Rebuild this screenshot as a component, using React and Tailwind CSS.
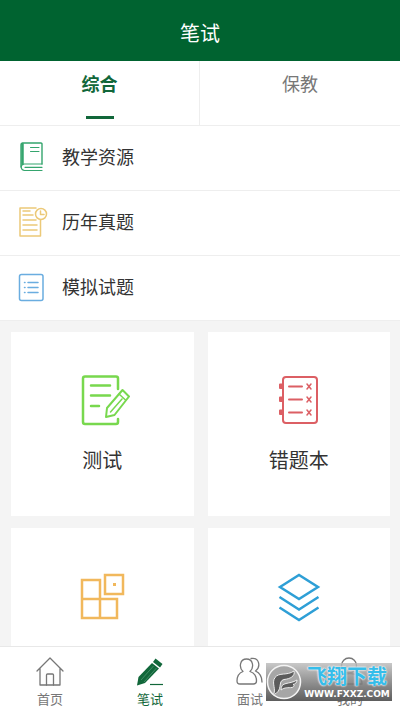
const iconProps = { fill: "none", strokeLinecap: "round", strokeLinejoin: "round" };

function BookIcon() {
  return (
    <svg className="w-8 h-8" viewBox="0 0 32 32" {...iconProps} stroke="#35a56e" strokeWidth="1.4">
      <path d="M26 24H8.500a3.200 3.200 0 0 0 0 6.500H26M9 27.300H26" strokeWidth="1.2" />
      <path d="M26 24V4a1 1 0 0 0-1-1H7a2 2 0 0 0-2 2V27" />
      <path d="M6.500 4V24" strokeWidth="2.500" />
      <path d="M14.500 7.500H23M14.500 11.500H23" strokeWidth="1" />
    </svg>
  );
}

function PaperIcon() {
  return (
    <svg className="w-8 h-8" viewBox="0 0 32 32" {...iconProps} stroke="#ecc978" strokeWidth="1.5">
      <path d="M20 3H4V31H24.500V15" />
      <circle cx="25" cy="9" r="5.500" />
      <path d="M24.500 6V9.500H28" />
      <path d="M7 6H14M7 10H17M7 15H20M7 20H21M7 25H21" />
    </svg>
  );
}

function ListIcon() {
  return (
    <svg className="w-8 h-8" viewBox="0 0 32 32" {...iconProps} stroke="#6aade0" strokeWidth="1.5">
      <rect x="3.500" y="4.500" width="23.500" height="26" rx="2" />
      <path d="M12 12.500H22M12 17.500H22M12 22.500H22" />
      <path d="M8.500 12.500H9M8.500 17.500H9M8.500 22.500H9" />
    </svg>
  );
}

function TestIcon() {
  return (
    <svg className="w-14 h-14" viewBox="-6 0 56 56" {...iconProps} stroke="#78d84e" strokeWidth="2.500">
      <path d="M38 17V6.500a2 2 0 0 0-2-2H5a2 2 0 0 0-2 2V50a2 2 0 0 0 2 2H36a2 2 0 0 0 2-2V47" />
      <path d="M11 13.500H30M11 23.500H30M11 34H19" />
      <path d="M26 45L27 36L42.500 18L49 24.500L34.500 43Z" strokeWidth="2" />
      <path d="M39 22L45.500 28M30.500 40L42 27" strokeWidth="1.500" />
    </svg>
  );
}

function WrongIcon() {
  return (
    <svg className="w-14 h-14" viewBox="0 0 56 56" {...iconProps} stroke="#dc5f64" strokeWidth="2">
      <rect x="12" y="5" width="34" height="46" rx="3" />
      <path d="M9 12.500H11V16H9ZM9 25.500H11V29H9ZM9 38.500H11V42H9Z" />
      <path d="M18 14.500H31M18 27.500H31M18 40.500H31" />
      <path d="M36 12L40 17M40 12L36 17M36 25L40 30M40 25L36 30M36 38L40 43M40 38L36 43" strokeWidth="1.500" />
    </svg>
  );
}

function BlocksIcon() {
  return (
    <svg className="w-14 h-14" viewBox="-5 0 56 56" fill="none" stroke="#f1b85c" strokeWidth="2.500">
      <path d="M3 12H21V50H3ZM3 31H38V50H21" />
      <rect x="26" y="7" width="18" height="19" />
      <rect x="34" y="15" width="3" height="3" fill="#f1b85c" stroke="none" />
    </svg>
  );
}

function LayersIcon() {
  return (
    <svg className="w-14 h-14" viewBox="0 0 56 56" fill="none" stroke="#2e9fd6" strokeWidth="2.500">
      <path d="M9 19L28 7L47 19L28 31Z" />
      <path d="M8.500 29L28 41.500L47.500 29M8.500 39.500L28 52L47.500 39.500" />
    </svg>
  );
}

function HomeIcon() {
  return (
    <svg className="w-8 h-8" viewBox="0 0 32 32" {...iconProps} stroke="#777" strokeWidth="1.300">
      <path d="M3 16L16 3L29 16M6 13.500V30H26V13.500" />
      <path d="M12.500 30V20a1 1 0 0 1 1-1H18.500a1 1 0 0 1 1 1V30" />
    </svg>
  );
}

function PencilIcon() {
  return (
    <svg className="w-8 h-8" viewBox="0 0 32 32" fill="#11673a">
      <path d="M21.500 3.500L28.500 9L26 12.500L19 7Z" />
      <path d="M18 8L25 13.500L11 28L3 30.500L4.500 22Z" />
      <path d="M19.500 11L7 25M22.500 13L10 27" stroke="#4d9470" strokeWidth="0.800" />
      <path d="M16 29.500H29" stroke="#11673a" strokeWidth="1.200" />
    </svg>
  );
}

function PeopleIcon() {
  return (
    <svg className="w-8 h-8" viewBox="0 0 32 32" {...iconProps} stroke="#777" strokeWidth="1.300">
      <path d="M9 16.500C4.500 12 6 4 12.500 4S20.500 12 16 16.500C20.500 18 22.500 21.500 22.500 26C22.500 28 21.500 29 19.500 29H6C4 29 3 28 3 26C3 21.500 5 18 9 16.500Z" />
      <path d="M17 3.500C25.500 2 27 12 21.500 16C26 18 28 22 28 27" />
    </svg>
  );
}

function UserIcon() {
  return (
    <svg className="w-8 h-8" viewBox="0 0 32 32" {...iconProps} stroke="#777" strokeWidth="1.300">
      <circle cx="15" cy="10.500" r="7.500" />
      <path d="M4 29C4 15 28 15 28 29Z" />
    </svg>
  );
}

function SiteLogo() {
  return (
    <svg className="w-9 h-9 shrink-0" viewBox="0 0 36 36" fill="none">
      <circle cx="18" cy="18" r="16.500" fill="#a6a6a6" stroke="#f4f4f4" strokeWidth="1.500" />
      <g fill="#5c5c5c" stroke="#eee" strokeWidth="1" strokeLinejoin="round">
        <path d="M7 31C11 26 5 19 9 13.500C13 8 21 12 28 7C29.500 12 24 15 18 15.500C11 17 18 27 7 31Z" />
        <path d="M15 26C15 17 23 21 31 16C31 19 29 20 27 20.500C29 21 28 23 26 23.500C22 24 19 23 15 26Z" />
      </g>
    </svg>
  );
}

const resources = [
  { label: "教学资源", Icon: BookIcon },
  { label: "历年真题", Icon: PaperIcon },
  { label: "模拟试题", Icon: ListIcon },
];

// the last two cards run under the bottom bar
const cards = [
  { id: "test", label: "测试", Icon: TestIcon },
  { id: "wrong", label: "错题本", Icon: WrongIcon },
  { id: "blocks", Icon: BlocksIcon },
  { id: "layers", Icon: LayersIcon },
];

const navItems = [
  { label: "首页", Icon: HomeIcon },
  { label: "笔试", Icon: PencilIcon, active: true },
  { label: "面试", Icon: PeopleIcon },
  { label: "我的", Icon: UserIcon },
];

export default function App() {
  return (
    <div className="h-screen flex flex-col overflow-hidden bg-[#f4f4f4] text-[#333] font-['Noto_Sans_CJK_SC',sans-serif]">
      <header className="shrink-0 bg-[#006330] pt-4 pb-3">
        <h1 className="text-center text-xl leading-[33px] text-white">笔试</h1>
      </header>

      <div className="shrink-0 grid grid-cols-2 bg-white border-b border-[#eee] text-lg">
        <button className="h-16 flex flex-col items-center justify-between pt-2 pb-1.5 font-bold text-[#11673a] border-r border-[#eee]">
          综合
          <span className="w-7 h-[3px] bg-[#11673a]"></span>
        </button>
        <button className="h-16 flex flex-col items-center pt-2 text-[#777]">保教</button>
      </div>

      <main className="flex-1 min-h-0 overflow-hidden">
        <ul className="bg-white">
          {resources.map(({ label, Icon }) => (
            <li key={label} className="border-b border-[#eee]">
              <button className="w-full h-16 flex items-center gap-3.5 px-4 pb-1 text-lg">
                <Icon />
                {label}
              </button>
            </li>
          ))}
        </ul>

        <div className="grid grid-cols-2 gap-x-3.5 gap-y-3 pl-[11px] pr-2.5 pt-[11px]">
          {cards.map(({ id, label, Icon }) => (
            <button
              key={id}
              className="h-46 flex flex-col items-center gap-4.5 bg-white pt-10 text-xl"
            >
              <Icon />
              {label}
            </button>
          ))}
        </div>
      </main>

      <nav className="relative shrink-0 h-[65px] grid grid-cols-4 bg-white border-t border-[#e8e8e8] pt-2">
        {navItems.map(({ label, Icon, active }) => (
          <a
            key={label}
            href="#"
            className={`flex flex-col items-center gap-0.5 text-[13px] leading-5 ${active ? "text-[#11673a]" : "text-[#777]"}`}
          >
            <Icon />
            {label}
          </a>
        ))}

        {/* download site stamp over the last tab */}
        <div className="absolute right-2 bottom-2.5 w-[126px] h-[38px] flex items-center bg-linear-to-b from-[#bbb]/80 to-[#555]/95">
          <SiteLogo />
          <div className="flex-1 flex flex-col items-center text-white">
            <span className="text-xl leading-6 font-bold text-[#35bdea] [text-shadow:0_0_2px_#fff,0_0_2px_#fff]">飞翔下载</span>
            <span className="font-['DejaVu_Sans',sans-serif] text-[9px] leading-3 font-bold">WWW.FXXZ.COM</span>
          </div>
        </div>
      </nav>
    </div>
  );
}
